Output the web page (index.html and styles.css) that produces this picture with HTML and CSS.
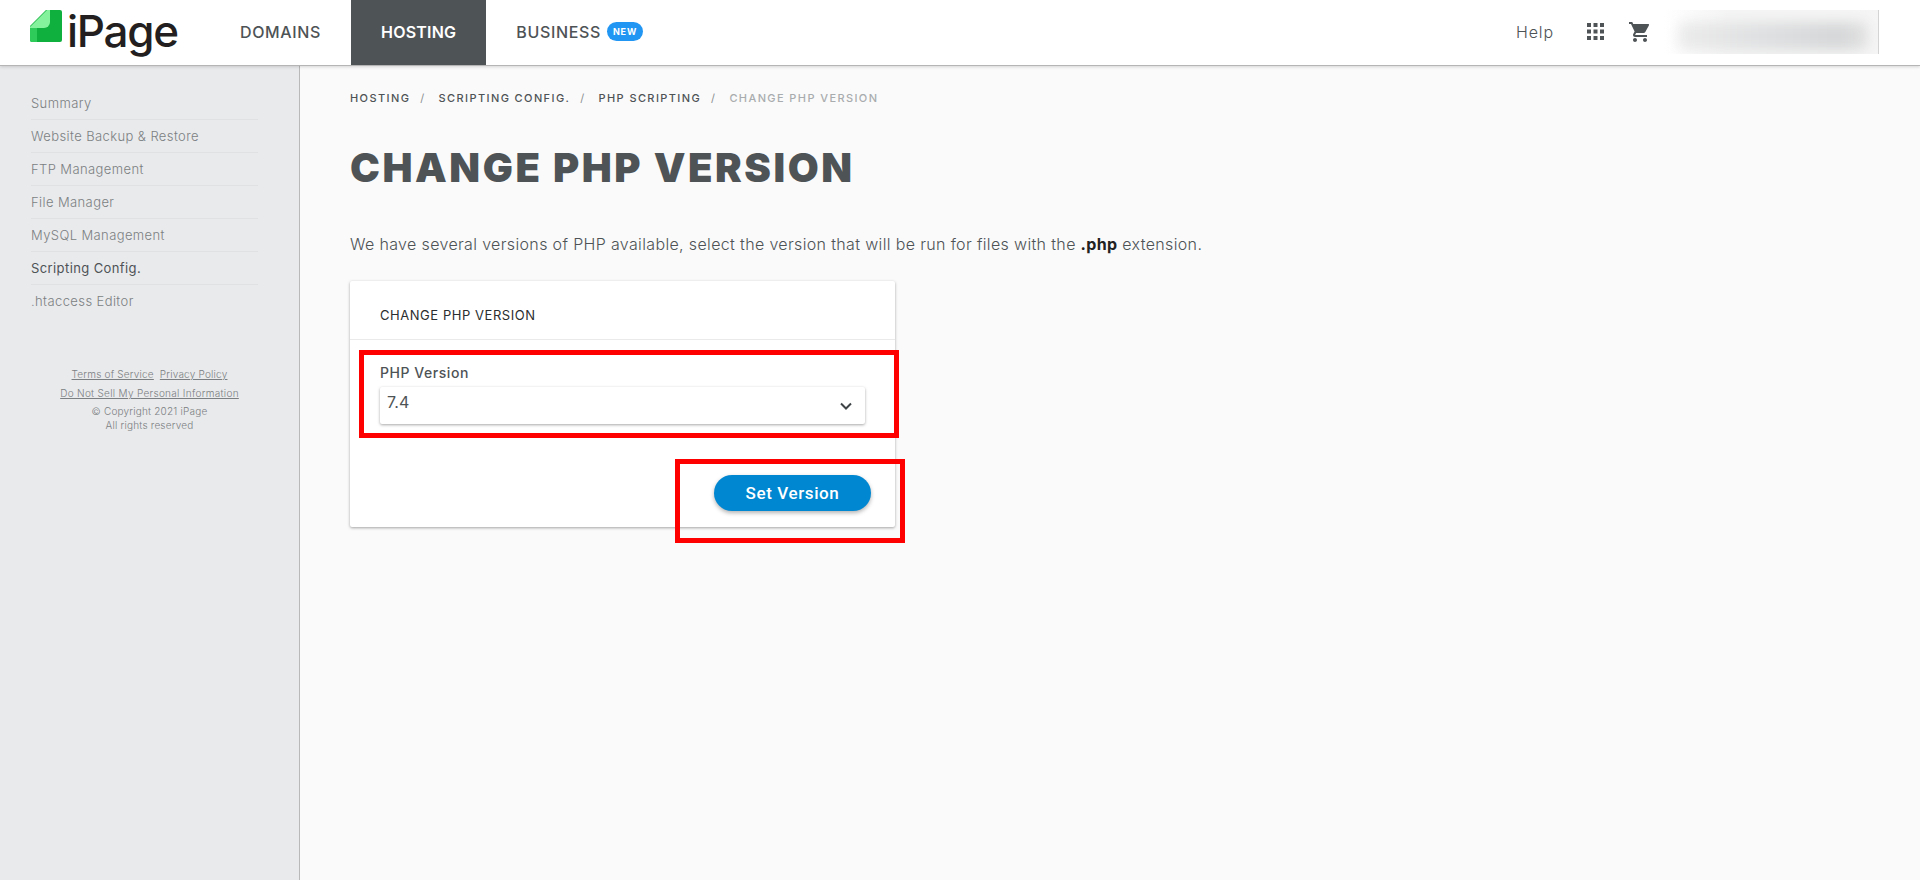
FILE: index.html
```html
<!DOCTYPE html>
<html lang="en">
<head>
  <meta charset="UTF-8" />
  <title>Change PHP Version</title>
  <link rel="stylesheet" href="styles.css">
</head>
<body>
  <header class="topbar">
    <a class="logo">
      <svg class="logo-mark" width="32" height="32" viewBox="0 0 32 32">
        <path d="M0 16 16 0H30a2 2 0 0 1 2 2V30a2 2 0 0 1-2 2H2a2 2 0 0 1-2-2Z" fill="#10b03f"/>
        <path d="M0 16H7V32H2a2 2 0 0 1-2-2Z" fill="#2fcb5a"/>
        <path d="M0 17 17 0H20V12a6 6 0 0 1-6 6H0Z" fill="#84f29c"/>
      </svg>
      <span class="logo-text">iPage</span>
    </a>
    <nav class="main-nav">
      <a class="nav-item">DOMAINS</a>
      <a class="nav-item active">HOSTING</a>
      <a class="nav-item">BUSINESS <span class="new-badge">NEW</span></a>
    </nav>
    <div class="top-right">
      <a class="help">Help</a>
      <svg class="grid-icon" width="17" height="17" viewBox="0 0 17 17" fill="#4e5356">
        <rect x="0" y="0" width="4" height="4"/><rect x="6.5" y="0" width="4" height="4"/><rect x="13" y="0" width="4" height="4"/>
        <rect x="0" y="6.5" width="4" height="4"/><rect x="6.5" y="6.5" width="4" height="4"/><rect x="13" y="6.5" width="4" height="4"/>
        <rect x="0" y="13" width="4" height="4"/><rect x="6.5" y="13" width="4" height="4"/><rect x="13" y="13" width="4" height="4"/>
      </svg>
      <svg class="cart-icon" width="24" height="24" viewBox="0 0 24 24" fill="#4e5356">
        <path d="M7 18c-1.1 0-1.99.9-1.99 2S5.900 22 7 22s2-.9 2-2-.9-2-2-2zM1 2v2h2l3.600 7.590-1.350 2.450c-.16.280-.25.610-.25.960 0 1.100.9 2 2 2h12v-2H7.420c-.14 0-.25-.11-.25-.25l.03-.12.9-1.630h7.450c.750 0 1.410-.41 1.750-1.030l3.580-6.490A1 1 0 0 0 20 4H5.210l-.94-2H1zm16 16c-1.100 0-1.990.9-1.990 2s.89 2 1.990 2 2-.9 2-2-.9-2-2-2z"/>
      </svg>
      <div class="account"><div class="account-blur"></div></div>
    </div>
  </header>

  <div class="page">
    <aside class="sidebar">
      <ul class="side-menu">
        <li>Summary</li>
        <li>Website Backup &amp; Restore</li>
        <li>FTP Management</li>
        <li>File Manager</li>
        <li>MySQL Management</li>
        <li class="current">Scripting Config.</li>
        <li>.htaccess Editor</li>
      </ul>
      <div class="side-footer">
        <p class="legal"><a>Terms of Service</a><a>Privacy Policy</a></p>
        <p class="legal"><a class="dns">Do Not Sell My Personal Information</a></p>
        <p class="copy">© Copyright 2021 iPage<br>All rights reserved</p>
      </div>
    </aside>

    <main class="content">
      <div class="breadcrumb">
        <a>HOSTING</a><span class="sep">/</span>
        <a>SCRIPTING CONFIG.</a><span class="sep">/</span>
        <a>PHP SCRIPTING</a><span class="sep">/</span>
        <span class="crumb-current">CHANGE PHP VERSION</span>
      </div>
      <h1>CHANGE PHP VERSION</h1>
      <p class="intro">We have several versions of PHP available, select the version that will be run for files with the <b>.php</b> extension.</p>

      <section class="card">
        <div class="card-head">CHANGE PHP VERSION</div>
        <div class="card-body">
          <label class="field-label">PHP Version</label>
          <div class="select-box">
            <span class="select-value">7.4</span>
            <svg width="14" height="9" viewBox="0 0 14 9" fill="none" stroke="#3f4447" stroke-width="2"><path d="M2 1.500 7 6.500 12 1.500"/></svg>
          </div>
        </div>
        <div class="card-foot">
          <button class="set-btn">Set Version</button>
        </div>
        <div class="mark mark-field"></div>
        <div class="mark mark-btn"></div>
      </section>
    </main>
  </div>
</body>
</html>
```

FILE: styles.css
```css
* { box-sizing: border-box; }

body {
  margin: 0;
  height: 880px;
  overflow: hidden;
  background: #fafafa;
  font-family: Inter, "Open Sans", sans-serif;
  color: #4e5356;
}

/* Top bar */
.topbar {
  display: flex;
  align-items: center;
  height: 66px;
  background: #fff;
  border-bottom: 1px solid #b5b5b5;
  box-shadow: 0 1px 3px rgba(0, 0, 0, 0.15);
  position: relative;
}

.logo {
  display: flex;
  align-items: center;
  width: 210px;
  height: 100%;
  padding-left: 30px;
}

.logo-mark { margin-top: -14px; }

.logo-text {
  margin-left: 5px;
  margin-top: -4px;
  font-size: 44px;
  font-weight: 500;
  letter-spacing: -1.3px;
  color: #231f20;
}

.main-nav {
  display: flex;
  height: 100%;
}

.nav-item {
  display: flex;
  align-items: center;
  padding: 0 30px 2px;
  font-size: 16px;
  font-weight: 500;
  letter-spacing: 0.65px;
  color: #4e5356;
}

.nav-item.active {
  background: #4e5356;
  color: #fff;
  font-weight: 600;
  letter-spacing: 0.2px;
}

.new-badge {
  margin-left: 6px;
  padding: 0 6px;
  height: 19px;
  line-height: 19px;
  border-radius: 10px;
  background: #2196f3;
  color: #fff;
  font-size: 9px;
  font-weight: 700;
  letter-spacing: 0.8px;
}

.top-right {
  display: flex;
  align-items: center;
  margin-left: auto;
  padding-right: 41px;
  padding-bottom: 2px;
}

.help {
  font-size: 16px;
  font-weight: 300;
  letter-spacing: 0.9px;
  color: #4e5356;
}

.grid-icon { margin-left: 33px; }
.cart-icon { margin-left: 24px; }

.account {
  width: 215px;
  height: 44px;
  margin-left: 12px;
  background: linear-gradient(90deg, #fff, #f5f5f5 30%);
  border-right: 1px solid #d4d4d4;
  overflow: hidden;
  display: flex;
  align-items: center;
  justify-content: flex-end;
}

.account-blur {
  width: 190px;
  height: 28px;
  margin-top: 8px;
  margin-right: 10px;
  border-radius: 8px;
  background: linear-gradient(90deg, #ececec, #e0e1e2 40%, #d6d7d8 85%, #e2e2e2);
  filter: blur(6px);
}

/* Sidebar */
.page {
  display: flex;
  height: 814px;
}

.sidebar {
  width: 300px;
  padding: 21px 31px 0 31px;
  background: #e9eaec;
  border-right: 1px solid #b9b9b9;
  flex-shrink: 0;
}

.side-menu {
  list-style: none;
  margin: 0;
  padding: 0 10px 0 0;
}

.side-menu li {
  height: 33px;
  line-height: 32px;
  border-bottom: 1px solid #e0e1e3;
  font-size: 13px;
  font-weight: 300;
  letter-spacing: 0.4px;
  color: #7b7f82;
}

.side-menu li:last-child { border-bottom: none; }

.side-menu li.current {
  font-weight: 400;
  color: #4e5356;
}

.side-footer {
  margin-top: 47px;
  text-align: center;
  font-size: 10px;
  font-weight: 300;
  letter-spacing: 0.2px;
  color: #7b7f82;
}

.side-footer p { margin: 0; }

.legal {
  height: 19px;
  line-height: 19px;
}

.legal a {
  text-decoration: underline;
  margin: 0 3px;
}

.legal .dns { letter-spacing: 0.3px; }

.copy {
  line-height: 14px;
  padding-top: 1px;
}

/* Main content */
.content {
  flex: 1;
  padding: 25px 0 0 50px;
}

.breadcrumb {
  height: 14px;
  line-height: 14px;
  font-size: 11px;
  font-weight: 500;
  letter-spacing: 1.4px;
  color: #4e5356;
}

.sep {
  margin: 0 10px;
  font-weight: 400;
  letter-spacing: 0;
  color: #8b8f91;
}

.crumb-current { color: #a9acae; }

h1 {
  margin: 38px 0 0;
  height: 50px;
  line-height: 50px;
  font-size: 40px;
  font-weight: 900;
  letter-spacing: 2.55px;
  color: #4e5356;
}

.intro {
  margin: 39px 0 0;
  height: 24px;
  line-height: 24px;
  font-size: 16px;
  font-weight: 300;
  letter-spacing: 0.35px;
  color: #4e5356;
}

.intro b {
  font-weight: 700;
  color: #222;
}

/* Card */
.card {
  position: relative;
  width: 545px;
  height: 246px;
  margin-top: 25px;
  background: #fff;
  border-radius: 2px;
  box-shadow: 0 1px 3px rgba(0, 0, 0, 0.35);
}

.card-head {
  height: 59px;
  padding: 27px 30px 0;
  line-height: 14px;
  font-size: 13px;
  font-weight: 400;
  letter-spacing: 0.55px;
  color: #2b2e30;
  border-bottom: 1px solid #eaeaea;
}

.card-body { padding: 24px 30px 0; }

.field-label {
  display: block;
  height: 17px;
  line-height: 18px;
  font-size: 14px;
  font-weight: 500;
  letter-spacing: 0.55px;
  color: #4e5356;
}

.select-box {
  display: flex;
  align-items: center;
  justify-content: space-between;
  height: 37px;
  margin-top: 6px;
  padding: 0 12px 0 7px;
  background: #fff;
  border-radius: 2px;
  box-shadow: 0 1px 3px rgba(0, 0, 0, 0.35);
}

.select-value {
  margin-top: -7px;
  font-size: 16px;
  letter-spacing: 0.2px;
  color: #4e5356;
}

.select-box svg { margin-top: 1px; }

.card-foot {
  display: flex;
  justify-content: flex-end;
  padding: 51px 24px 0 0;
}

.set-btn {
  width: 157px;
  height: 36px;
  border: none;
  border-radius: 18px;
  background: #0087d1;
  color: #fff;
  font-family: Roboto, sans-serif;
  font-size: 17px;
  font-weight: 500;
  letter-spacing: 0.6px;
  box-shadow: 0 2px 4px rgba(0, 0, 0, 0.3);
}

/* red annotation frames */
.mark {
  position: absolute;
  border: 5px solid #f00;
}

.mark-field {
  left: 9px;
  top: 69px;
  width: 540px;
  height: 88px;
}

.mark-btn {
  left: 325px;
  top: 178px;
  width: 230px;
  height: 84px;
}
```
